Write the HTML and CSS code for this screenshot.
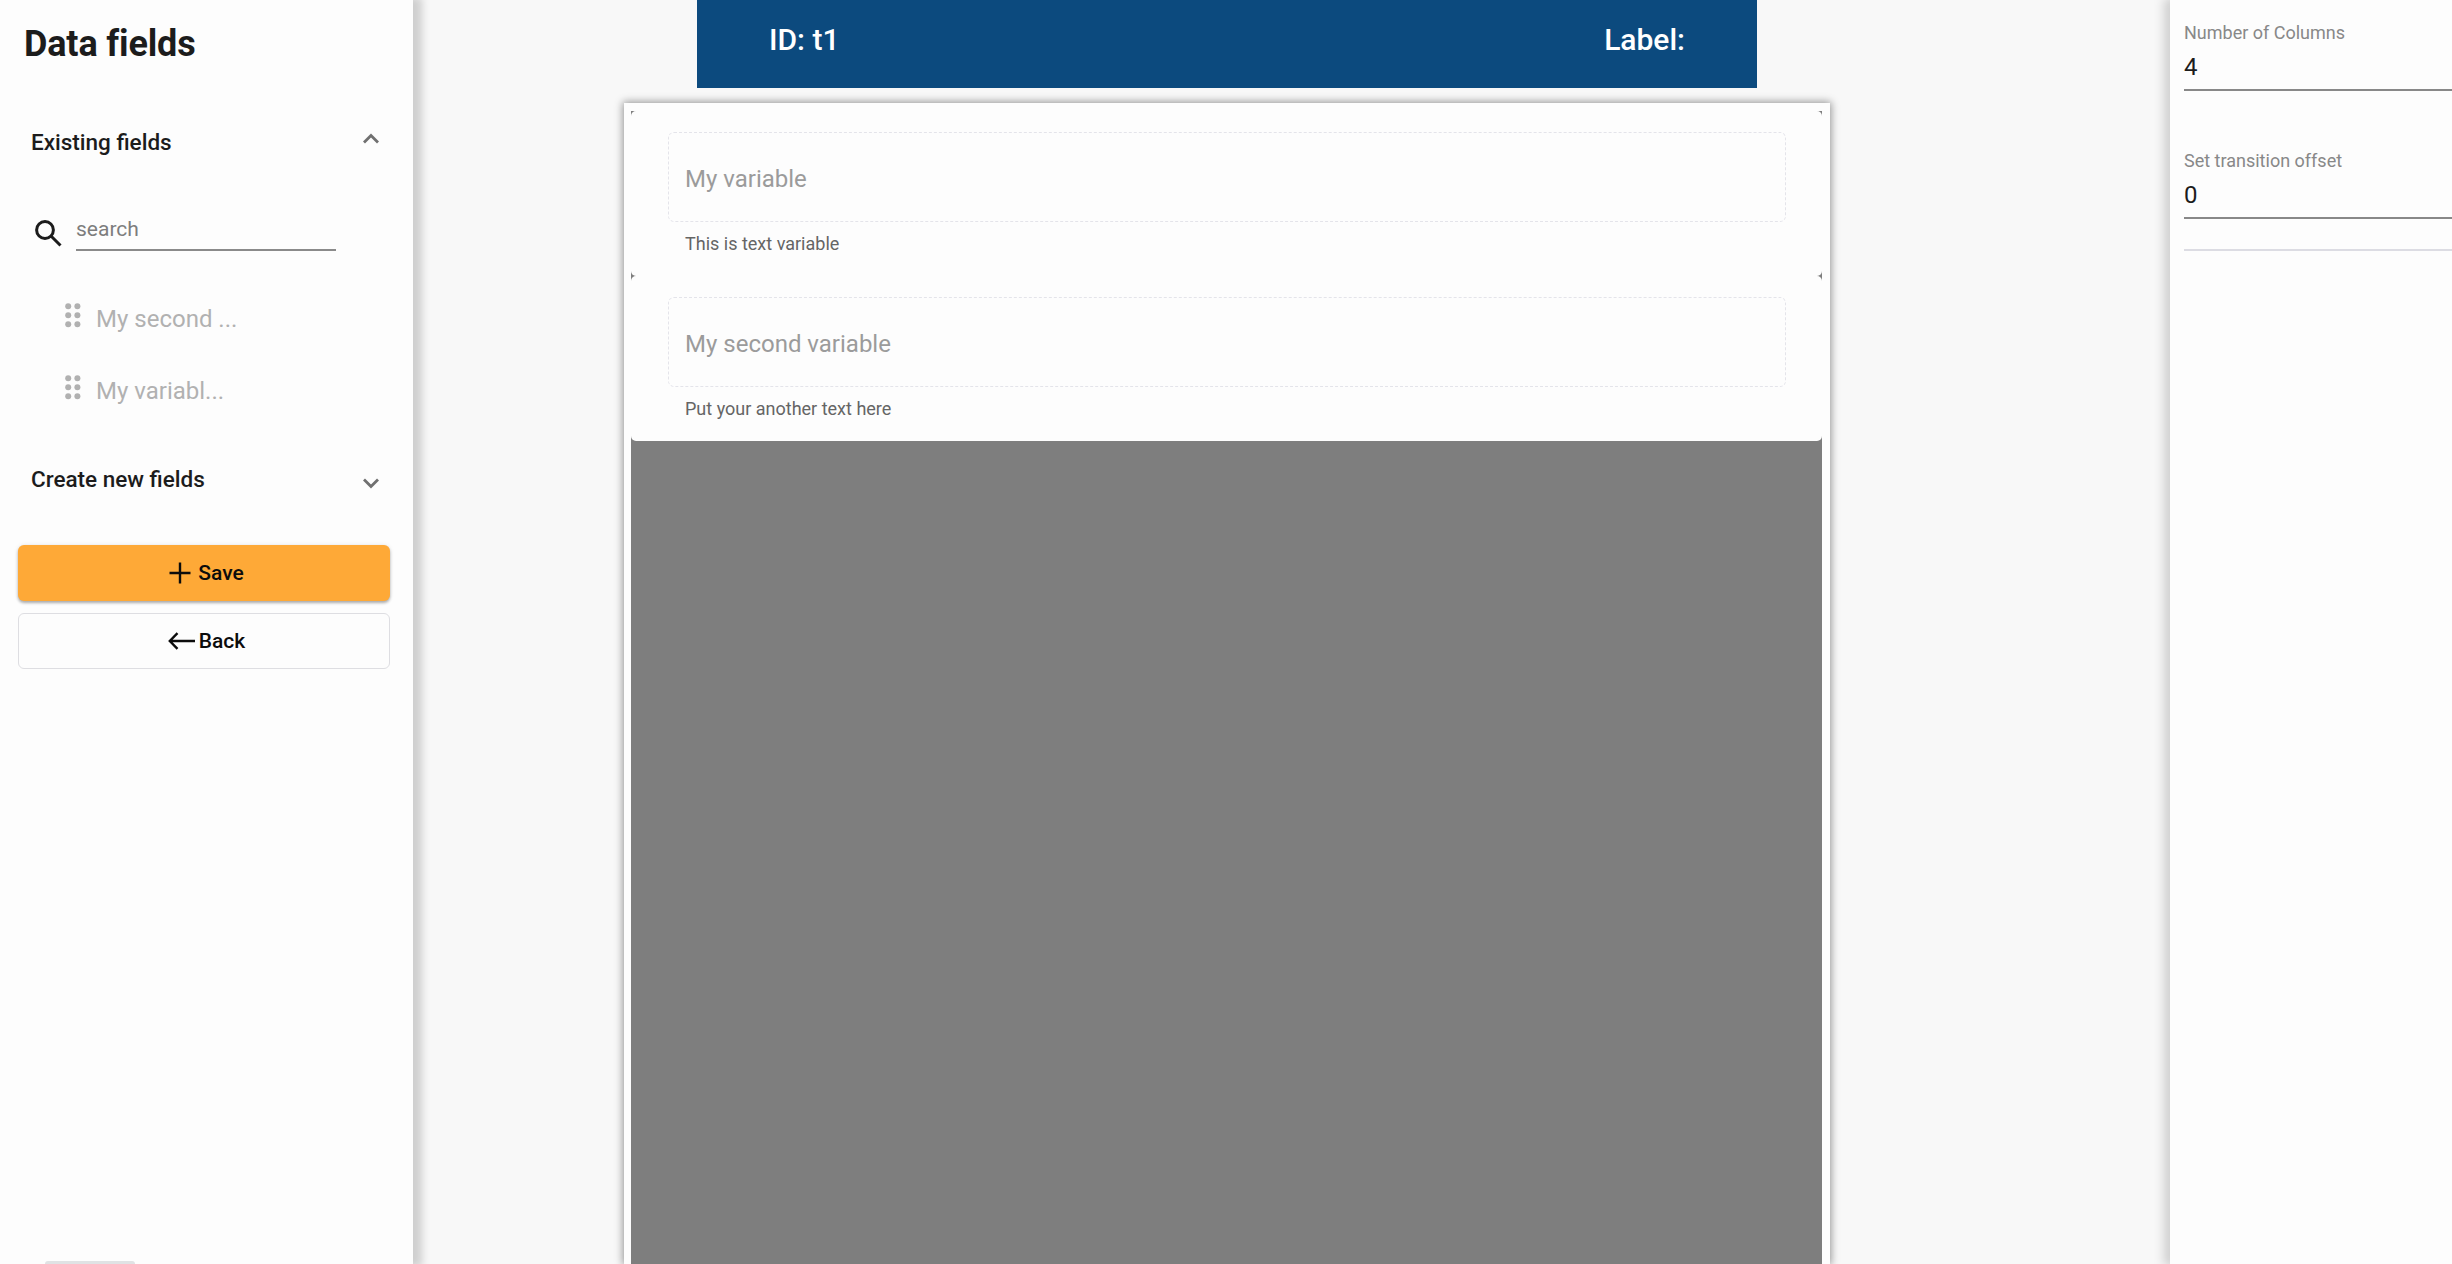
FILE: index.html
```html
<!DOCTYPE html>
<html lang="en">
<head>
<meta charset="utf-8">
<title>Data fields</title>
<link rel="stylesheet" href="styles.css">
</head>
<body>
<div class="app">
  <aside class="sidebar">
    <h1 class="title"><span>Data fields</span></h1>
    <div class="section section-open"><span>Existing fields</span>
      <svg class="chevron chevron-up" viewBox="0 0 16 11"><path d="M1 9.5 8 2.5l7 7"/></svg>
    </div>
    <div class="search">
      <svg class="search-icon" viewBox="0 0 27 27"><circle cx="10" cy="10" r="8.4"/><path d="m16 16 9.5 9.5"/></svg>
      <div class="search-input"><span>search</span></div>
    </div>
    <div class="item">
      <svg class="grip" viewBox="0 0 16 25"><circle cx="3.2" cy="3.2" r="3"/><circle cx="12.4" cy="3.2" r="3"/><circle cx="3.2" cy="12.2" r="3"/><circle cx="12.4" cy="12.2" r="3"/><circle cx="3.2" cy="21.2" r="3"/><circle cx="12.4" cy="21.2" r="3"/></svg>
      <span>My second ...</span>
    </div>
    <div class="item">
      <svg class="grip" viewBox="0 0 16 25"><circle cx="3.2" cy="3.2" r="3"/><circle cx="12.4" cy="3.2" r="3"/><circle cx="3.2" cy="12.2" r="3"/><circle cx="12.4" cy="12.2" r="3"/><circle cx="3.2" cy="21.2" r="3"/><circle cx="12.4" cy="21.2" r="3"/></svg>
      <span>My variabl...</span>
    </div>
    <div class="section section-closed"><span>Create new fields</span>
      <svg class="chevron chevron-down" viewBox="0 0 16 11"><path d="m1 1.5 7 7 7-7"/></svg>
    </div>
    <div class="button save">
      <svg class="plus" viewBox="0 0 22 22"><path d="M11 .5v21M.5 11h21"/></svg><span>Save</span>
    </div>
    <div class="button back">
      <svg class="arrow" viewBox="0 0 27 18"><path d="M27 9H2M9.500 1.200 1.800 9l7.700 7.800"/></svg><span>Back</span>
    </div>
    <div class="footer-tab"></div>
  </aside>
  <main class="workspace">
    <header class="banner"><span>ID: t1</span><span>Label:</span></header>
    <section class="card">
      <div class="grid">
        <div class="tile"><div class="field"><span>My variable</span></div><p class="hint"><span>This is text variable</span></p></div>
        <div class="tile"><div class="field"><span>My second variable</span></div><p class="hint"><span>Put your another text here</span></p></div>
      </div>
    </section>
  </main>
  <aside class="settings">
    <div class="setting"><span class="caption">Number of Columns</span><span class="value">4</span></div>
    <div class="setting"><span class="caption">Set transition offset</span><span class="value">0</span></div>
    <hr class="divider">
  </aside>
</div>
</body>
</html>
```
FILE: styles.css
```css
* { box-sizing: border-box; }
body {
  margin: 0;
  overflow: hidden;
  font-family: Roboto, sans-serif;
  color: #1c1c1c;
}
svg { display: block; flex: none; fill: none; stroke: currentColor; }
span { white-space: nowrap; }
.app {
  display: flex;
  width: 2452px;
  height: 1264px;
  overflow: hidden;
  background: #f8f8f8;
}
.sidebar {
  z-index: 1;
  display: flex;
  flex-direction: column;
  width: 413px;
  flex: none;
  padding: 14px 23px 0 18px;
  background: #fdfdfd;
  box-shadow: 6px 0 8px 3px rgba(0, 0, 0, .17);
}
.title {
  margin: 0 0 0 6px;
  font-size: 36px;
  line-height: 60px;
  font-weight: 700;
  letter-spacing: -.15px;
}
.section {
  display: flex;
  align-items: center;
  justify-content: space-between;
  height: 40px;
  padding: 0 11px 0 13px;
  font-size: 22.5px;
  font-weight: 500;
}
.section-open { margin-top: 48px; }
.section-closed { margin-top: 32px; }
.chevron { width: 16px; height: 11px; stroke: #707070; stroke-width: 2.8; }
.chevron-up { margin-bottom: 7px; }
.chevron-down { margin-top: 9px; }
.search { display: flex; margin: 48px 0 0 17px; }
.search-icon { width: 27px; height: 27px; margin-top: 10px; stroke-width: 3; }
.search-input {
  width: 260px;
  height: 41px;
  margin-left: 14px;
  border-bottom: 2px solid #8a8a8a;
  font-size: 21px;
  line-height: 39px;
  color: #7d7d7d;
}
.item {
  display: flex;
  align-items: center;
  gap: 15px;
  height: 72px;
  padding-left: 47px;
  font-size: 24px;
  color: #b1b1b1;
}
.search + .item { margin-top: 32px; }
.grip { width: 16px; height: 25px; margin-top: -7px; fill: currentColor; stroke: none; }
.button {
  display: flex;
  flex: none;
  align-items: center;
  justify-content: center;
  height: 56px;
  padding-left: 5px;
  border-radius: 6px;
  color: #0c0c0c;
  font-size: 21px;
  font-weight: 500;
}
.save {
  gap: 7px;
  margin-top: 46px;
  background: #fea937;
  box-shadow: 0 2px 3px rgba(0, 0, 0, .3), 0 0 5px rgba(0, 0, 0, .08);
}
.back { gap: 4px; margin-top: 12px; border: 1px solid #dedee2; }
.plus { width: 22px; height: 22px; stroke-width: 2.4; }
.arrow { width: 27px; height: 18px; stroke-width: 2.4; }
.footer-tab {
  width: 90px;
  height: 3px;
  margin: auto 0 0 27px;
  background: #e0e2e4;
  border-radius: 3px 3px 0 0;
}
.workspace {
  display: flex;
  flex-direction: column;
  width: 1757px;
  padding: 0 340px 0 211px;
}
.banner {
  display: flex;
  flex: none;
  justify-content: space-between;
  height: 88px;
  margin: 0 73px;
  padding: 0 72px;
  background: #0c4a7e;
  color: #fff;
  font-size: 30px;
  font-weight: 500;
  line-height: 79px;
}
.card {
  flex: 1;
  margin-top: 15px;
  padding: 8px 8px 0 7px;
  background: #fdfdfd;
  box-shadow: 0 0 8px 1px rgba(0, 0, 0, .42);
}
.grid { height: 100%; background: #7e7e7e; }
.tile {
  height: 165px;
  padding: 21px 36px 0 37px;
  border-radius: 5px;
  background: #fdfdfd;
}
.field {
  height: 90px;
  padding-left: 16px;
  border: 1px dashed #e4e4ea;
  border-radius: 6px;
  color: #9b9b9b;
  font-size: 24px;
  line-height: 92px;
}
.hint {
  margin: 11px 0 0 17px;
  color: #656565;
  font-size: 18px;
  line-height: 22px;
}
.settings {
  z-index: 1;
  width: 282px;
  flex: none;
  padding: 22px 0 0 14px;
  background: #fdfdfd;
  box-shadow: -4px 0 10px 2px rgba(0, 0, 0, .17);
}
.setting {
  display: flex;
  flex-direction: column;
  height: 69px;
  margin-bottom: 59px;
  border-bottom: 2px solid #888;
}
.caption { color: #888; font-size: 18px; line-height: 22px; }
.value { margin-top: 8px; font-size: 24px; line-height: 30px; }
.divider { margin: -29px 0 0; border: 0; border-top: 2px solid #dcdce3; }
```
